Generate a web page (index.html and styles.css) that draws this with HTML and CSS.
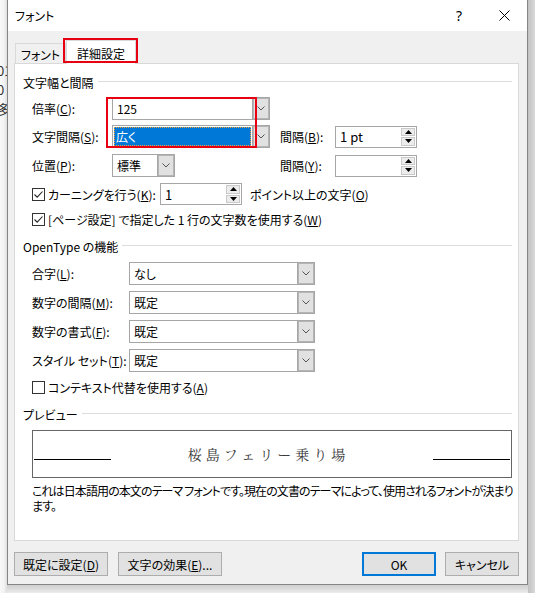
FILE: index.html
```html
<!DOCTYPE html>
<html lang="ja">
<head>
<meta charset="utf-8">
<title>フォント</title>
<link rel="stylesheet" href="styles.css">
</head>
<body>
<div class="screen">
  <div class="backdrop">
    <span class="frag">01</span>
    <span class="frag">0</span>
    <span class="frag">多</span>
  </div>
  <div class="window-col">
    <div class="dialog">
      <div class="titlebar">
        <span class="title">フォント</span>
        <span class="tb-btn help">?</span>
        <span class="tb-btn close"><svg width="11" height="11" viewBox="0 0 11 11"><path d="M0.5 0.5L10.5 10.5M10.5 0.5L0.5 10.5" stroke="#000" stroke-width="1" fill="none"/></svg></span>
      </div>
      <div class="body">
        <div class="tabs">
          <div class="tab">フォント</div>
          <div class="tab active">詳細設定<span class="mark mark-tab"></span></div>
        </div>
        <div class="panel">
          <span class="mark mark-combo"></span>
          <div class="grp-head"><span>文字幅と間隔</span><i class="rule"></i></div>

          <div class="row r-first">
            <div class="leftpart">
              <span class="lbl w80">倍率(<u>C</u>):</span>
              <div class="combo w158"><span class="ctext">125</span><span class="cbtn"><svg width="8" height="5" viewBox="0 0 8 5"><polyline points="0.5,0.5 4,4 7.5,0.5" fill="none" stroke="#555" stroke-width="1"/></svg></span></div>
            </div>
          </div>

          <div class="row r-next">
            <div class="leftpart">
              <span class="lbl w80">文字間隔(<u>S</u>):</span>
              <div class="combo w158"><span class="ctext selwrap"><span class="sel">広く</span></span><span class="cbtn"><svg width="8" height="5" viewBox="0 0 8 5"><polyline points="0.5,0.5 4,4 7.5,0.5" fill="none" stroke="#555" stroke-width="1"/></svg></span></div>
            </div>
            <span class="lbl w55">間隔(<u>B</u>):</span>
            <div class="spin"><span class="stext">1 pt</span><span class="sbtns"><i class="sb"><svg width="7" height="4" viewBox="0 0 7 4"><polygon points="3.5,0 7,4 0,4" fill="#000"/></svg></i><i class="sb"><svg width="7" height="4" viewBox="0 0 7 4"><polygon points="0,0 7,0 3.5,4" fill="#000"/></svg></i></span></div>
          </div>

          <div class="row r-next2">
            <div class="leftpart">
              <span class="lbl w80">位置(<u>P</u>):</span>
              <div class="combo w63"><span class="ctext">標準</span><span class="cbtn"><svg width="8" height="5" viewBox="0 0 8 5"><polyline points="0.5,0.5 4,4 7.5,0.5" fill="none" stroke="#555" stroke-width="1"/></svg></span></div>
            </div>
            <span class="lbl w55">間隔(<u>Y</u>):</span>
            <div class="spin"><span class="stext"></span><span class="sbtns"><i class="sb"><svg width="7" height="4" viewBox="0 0 7 4"><polygon points="3.5,0 7,4 0,4" fill="#000"/></svg></i><i class="sb"><svg width="7" height="4" viewBox="0 0 7 4"><polygon points="0,0 7,0 3.5,4" fill="#000"/></svg></i></span></div>
          </div>

          <div class="row r-kern">
            <div class="chkcell">
              <span class="chk"><svg width="11" height="11" viewBox="0 0 11 11"><polyline points="1.5,5.5 4.2,8.2 9.5,2.5" fill="none" stroke="#222" stroke-width="1.1"/></svg></span>
              <span>カーニングを行う(<u>K</u>):</span>
            </div>
            <div class="spin"><span class="stext">1</span><span class="sbtns"><i class="sb"><svg width="7" height="4" viewBox="0 0 7 4"><polygon points="3.5,0 7,4 0,4" fill="#000"/></svg></i><i class="sb"><svg width="7" height="4" viewBox="0 0 7 4"><polygon points="0,0 7,0 3.5,4" fill="#000"/></svg></i></span></div>
            <span class="after-spin">ポイント以上の文字(<u>O</u>)</span>
          </div>

          <div class="row r-chk">
            <span class="chk"><svg width="11" height="11" viewBox="0 0 11 11"><polyline points="1.5,5.5 4.2,8.2 9.5,2.5" fill="none" stroke="#222" stroke-width="1.1"/></svg></span>
            <span>[ページ設定] で指定した 1 行の文字数を使用する(<u>W</u>)</span>
          </div>

          <div class="grp-head g2"><span>OpenType の機能</span><i class="rule"></i></div>

          <div class="row r-ot1">
            <span class="lbl w97">合字(<u>L</u>):</span>
            <div class="combo w186"><span class="ctext">なし</span><span class="cbtn"><svg width="8" height="5" viewBox="0 0 8 5"><polyline points="0.5,0.5 4,4 7.5,0.5" fill="none" stroke="#555" stroke-width="1"/></svg></span></div>
          </div>
          <div class="row r-ot">
            <span class="lbl w97">数字の間隔(<u>M</u>):</span>
            <div class="combo w186"><span class="ctext">既定</span><span class="cbtn"><svg width="8" height="5" viewBox="0 0 8 5"><polyline points="0.5,0.5 4,4 7.5,0.5" fill="none" stroke="#555" stroke-width="1"/></svg></span></div>
          </div>
          <div class="row r-ot">
            <span class="lbl w97">数字の書式(<u>F</u>):</span>
            <div class="combo w186"><span class="ctext">既定</span><span class="cbtn"><svg width="8" height="5" viewBox="0 0 8 5"><polyline points="0.5,0.5 4,4 7.5,0.5" fill="none" stroke="#555" stroke-width="1"/></svg></span></div>
          </div>
          <div class="row r-ot">
            <span class="lbl w97">スタイル セット(<u>T</u>):</span>
            <div class="combo w186"><span class="ctext">既定</span><span class="cbtn"><svg width="8" height="5" viewBox="0 0 8 5"><polyline points="0.5,0.5 4,4 7.5,0.5" fill="none" stroke="#555" stroke-width="1"/></svg></span></div>
          </div>
          <div class="row r-ctx">
            <span class="chk"></span>
            <span>コンテキスト代替を使用する(<u>A</u>)</span>
          </div>

          <div class="grp-head g3"><span>プレビュー</span><i class="rule"></i></div>
          <div class="preview">
            <i class="pline"></i>
            <span class="ptext">桜島フェリー乗り場</span>
            <i class="pline"></i>
          </div>
          <p class="desc"><span class="dline">これは日本語用の本文のテーマ フォントです。現在の文書のテーマによって、使用されるフォントが決まり</span><span class="dline">ます。</span></p>
        </div>
        <div class="btns">
          <span class="btn b1">既定に設定(<u>D</u>)</span>
          <span class="btn b2">文字の効果(<u>E</u>)...</span>
          <span class="spacer"></span>
          <span class="btn b3 default">OK</span>
          <span class="btn b4">キャンセル</span>
        </div>
      </div>
    </div>
    <div class="shadow-bottom"></div>
  </div>
  <div class="shadow-right"></div>
</div>
</body>
</html>
```

FILE: styles.css
```css
* { box-sizing: border-box; }
html, body { margin: 0; padding: 0; }
body {
  width: 535px;
  height: 593px;
  overflow: hidden;
  background: #f4f4f4;
  font-family: "Noto Sans CJK JP", "Noto Sans", sans-serif;
  font-size: 12px;
  color: #000;
  font-feature-settings: "palt";
}
u { text-decoration: underline; text-underline-offset: 1px; }
i { font-style: normal; }

.screen { display: flex; width: 535px; height: 593px; }

.backdrop {
  width: 7px;
  flex: none;
  overflow: hidden;
  background: linear-gradient(to right, #f8f8f8 0, #f3f3f3 4px, #dedede 7px);
  padding-top: 61px;
  font-size: 13px;
  line-height: 19px;
  color: #333;
  white-space: nowrap;
}
.frag { display: block; margin-left: -3px; }

.window-col { width: 521px; flex: none; display: flex; flex-direction: column; }
.dialog {
  height: 585px;
  flex: none;
  border: 1px solid #858585;
  border-top: 0;
  display: flex;
  flex-direction: column;
  background: #f0f0f0;
}
.shadow-bottom { flex: 1; background: linear-gradient(to bottom, #cfcfcf, #ececec); }
.shadow-right { flex: 1; background: linear-gradient(to right, #c2c2c2, #d9d9d9); }

.titlebar { height: 31px; flex: none; background: #fff; display: flex; align-items: center; }
.title { flex: 1; padding-left: 7px; }
.tb-btn { width: 46px; height: 31px; display: flex; align-items: center; justify-content: center; }
.help { font-size: 14px; font-family: "Noto Sans", sans-serif; }
.close { width: 45px; }

.body { flex: 1; padding: 0 8px 0 6px; display: flex; flex-direction: column; }

.tabs { height: 32px; flex: none; display: flex; align-items: flex-end; padding-left: 1px; }
.tab {
  height: 20px;
  width: 51px;
  border: 1px solid #d9d9d9;
  border-bottom: 0;
  background: #f0f0f0;
  display: flex;
  align-items: center;
  justify-content: center;
  padding-top: 1px;
}
.tab.active {
  position: relative;
  z-index: 1;
  width: 70px;
  height: 24px;
  margin-bottom: -1px;
  background: #fff;
  padding-top: 1px;
}
.mark { position: absolute; border: 2px solid #e60012; pointer-events: none; z-index: 2; }
.mark-tab { left: -4px; top: -3px; right: -3px; bottom: 1px; }
.mark-combo { left: 91px; top: 33px; width: 151px; height: 51px; }

.panel {
  position: relative;
  height: 478px;
  flex: none;
  background: #fff;
  border: 1px solid #d9d9d9;
  padding: 10px 6px 0 8px;
}

.grp-head { height: 16px; display: flex; align-items: center; }
.grp-head .rule { flex: 1; height: 1px; background: #dcdcdc; margin-left: 4px; margin-top: -2px; }
.g2 { margin-top: 10px; }
.g3 { margin-top: 10px; }

.row { display: flex; align-items: center; padding-left: 9px; }
.r-first { margin-top: 7px; height: 23px; }
.r-next { margin-top: 5px; height: 23px; }
.r-next2 { margin-top: 6px; height: 23px; }
.r-kern { margin-top: 6px; height: 22px; }
.r-chk { margin-top: 5px; height: 18px; }
.r-ot1 { margin-top: 8px; height: 23px; }
.r-ot { margin-top: 6px; height: 23px; }
.r-ctx { margin-top: 6px; height: 18px; }

.leftpart { width: 248px; flex: none; display: flex; align-items: center; }
.lbl { flex: none; white-space: nowrap; }
.w80 { width: 80px; }
.w55 { width: 55px; }
.w97 { width: 97px; }

.combo {
  flex: none;
  height: 23px;
  display: flex;
  border: 1px solid #a6a6a6;
  background: #fff;
}
.w158 { width: 158px; }
.w63 { width: 63px; }
.w186 { width: 186px; }
.ctext { flex: 1; display: flex; align-items: center; padding-left: 4px; white-space: nowrap; overflow: hidden; }
.selwrap { padding: 1px; }
.sel {
  flex: 1;
  align-self: stretch;
  display: flex;
  align-items: center;
  padding-left: 2px;
  background: #0078d7;
  color: #fff;
  outline: 1px dotted #f0a030;
  outline-offset: -1px;
}
.cbtn {
  width: 17px;
  flex: none;
  background: #e1e1e1;
  border-left: 1px solid #a6a6a6;
  box-shadow: inset 0 0 0 1px #b5b5b5;
  display: flex;
  align-items: center;
  justify-content: center;
}

.spin {
  flex: none;
  width: 82px;
  height: 22px;
  display: flex;
  border: 1px solid #a6a6a6;
  background: #fff;
}
.stext { flex: 1; display: flex; align-items: center; padding-left: 4px; font-size: 13px; }
.sbtns { width: 15px; flex: none; display: flex; flex-direction: column; padding: 1px 1px 1px 0; gap: 1px; }
.sb {
  flex: 1;
  background: #ececec;
  border: 1px solid #c9c9c9;
  display: flex;
  align-items: center;
  justify-content: center;
}

.chkcell { width: 128px; flex: none; display: flex; align-items: center; white-space: nowrap; }
.chk {
  width: 13px;
  height: 13px;
  flex: none;
  border: 1px solid #333;
  background: #fff;
  margin-right: 3px;
  display: flex;
  align-items: center;
  justify-content: center;
}
.after-spin { margin-left: 8px; white-space: nowrap; }

.preview {
  margin-top: 8px;
  margin-left: 9px;
  height: 48px;
  border: 1px solid #666;
  display: flex;
  align-items: flex-start;
}
.pline { width: 77px; flex: none; height: 1px; background: #000; margin-top: 28px; }
.pline:first-child { margin-left: 1px; }
.pline:last-child { margin-right: 1px; }
.ptext {
  flex: 1;
  text-align: center;
  line-height: 46px;
  font-family: "Noto Serif CJK JP", "Liberation Serif", "Noto Sans CJK JP", serif;
  font-feature-settings: normal;
  font-size: 14px;
  letter-spacing: 4px;
  color: #3a3a3a;
  padding-right: 7px;
}
.desc { margin: 5px 0 0 9px; white-space: nowrap; }
.dline { display: block; height: 15px; line-height: 15px; letter-spacing: -0.9px; }

.btns { margin-top: 11px; height: 24px; display: flex; flex: none; }
.btn {
  height: 24px;
  flex: none;
  display: flex;
  align-items: center;
  justify-content: center;
  background: #e1e1e1;
  border: 1px solid #adadad;
  white-space: nowrap;
}
.b1 { width: 94px; }
.b2 { width: 104px; margin-left: 10px; }
.b3 { width: 74px; }
.b4 { width: 74px; margin-left: 9px; }
.default { border: 2px solid #0078d7; }
.spacer { flex: 1; }
```
